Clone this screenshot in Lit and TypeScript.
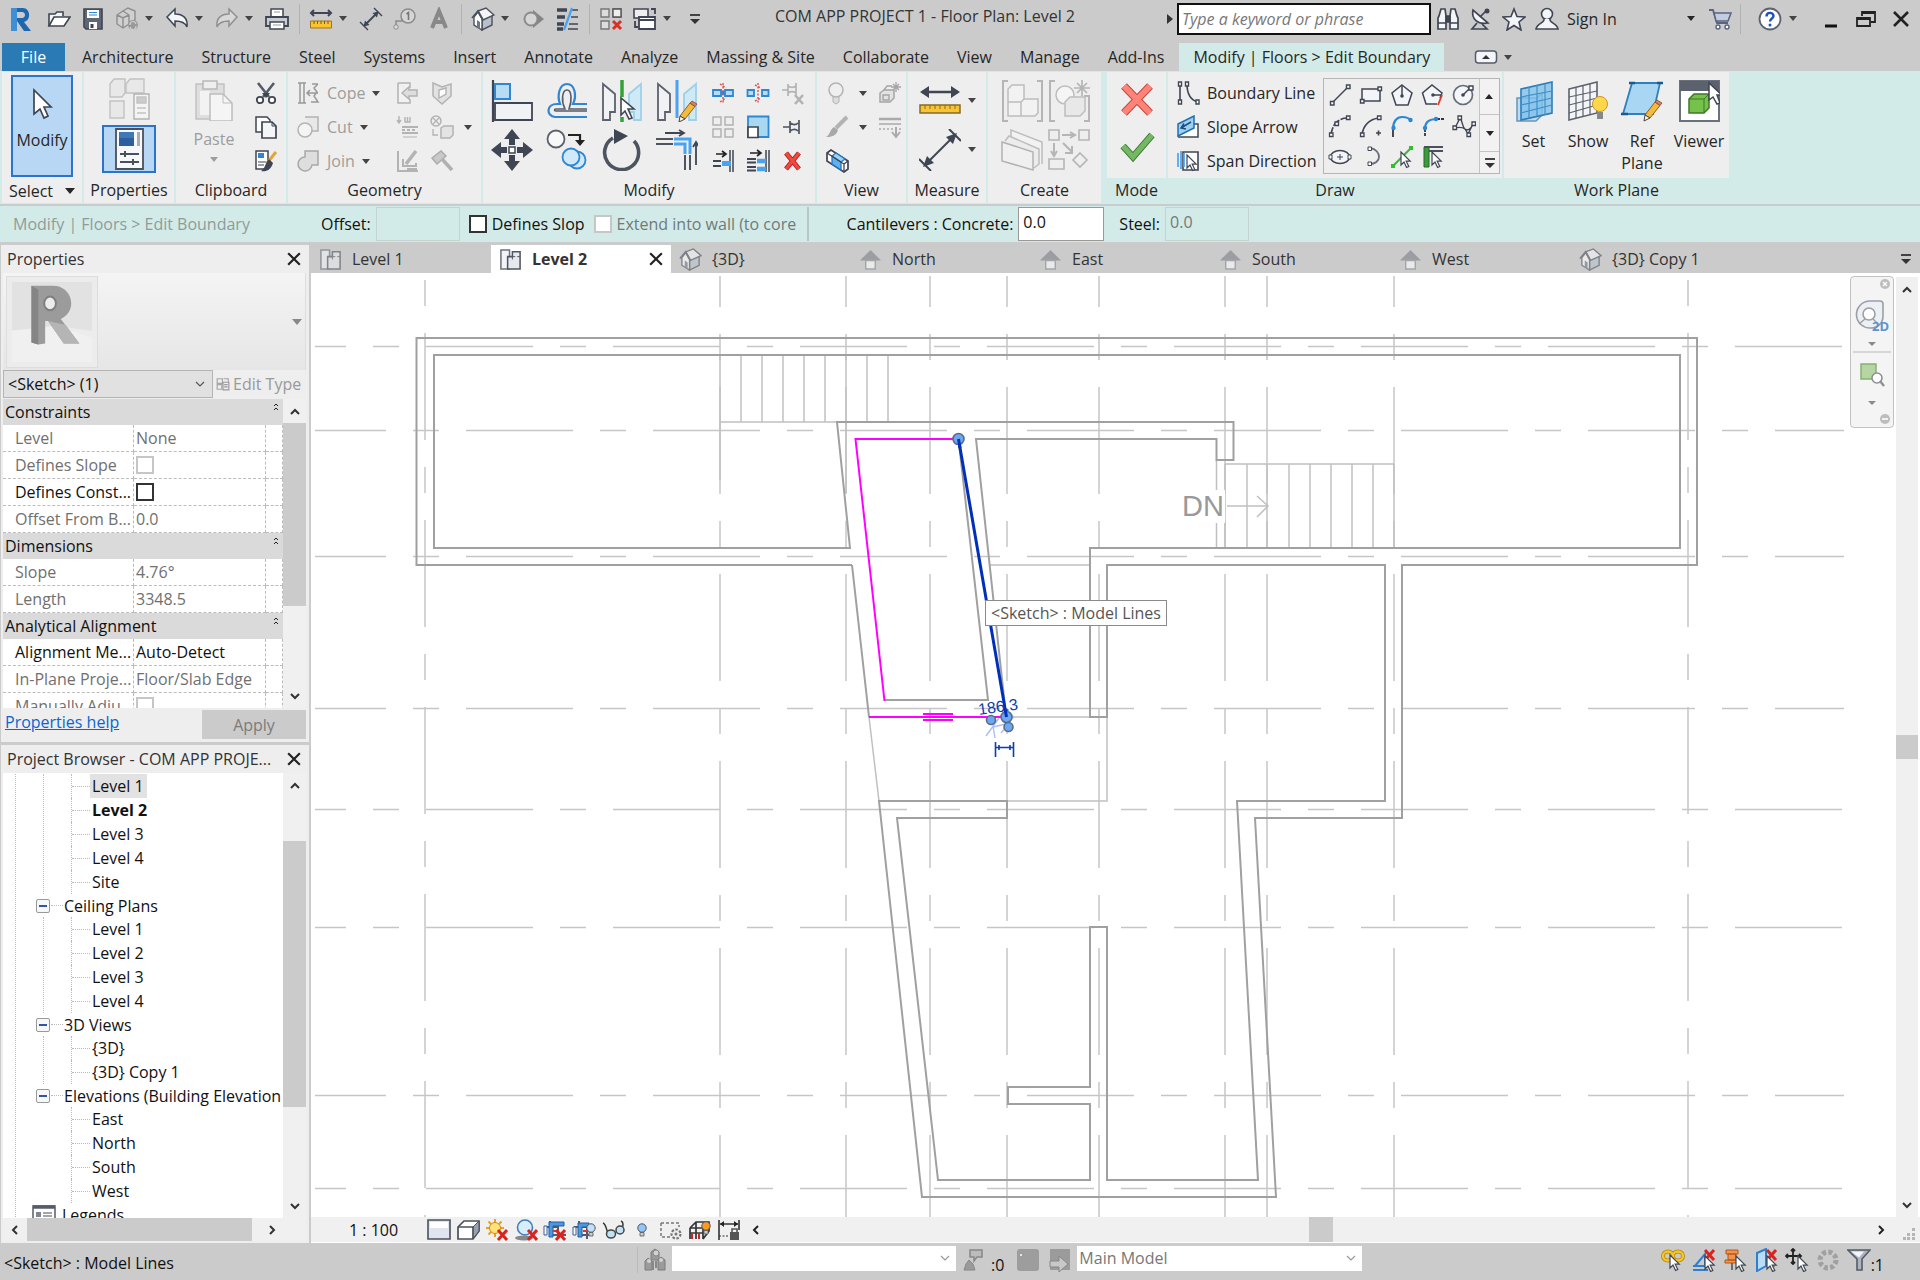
import { LitElement, html, svg, css, nothing, TemplateResult } from "lit";
import { customElement } from "lit/decorators.js";
import { classMap } from "lit/directives/class-map.js";

/* ---------- icons ---------- */

const D = "#3f4552";
const F = "#f3f5f8";
const B = "#2f86d2";
const LB = "#b5dcf5";
const G = "#b3b3b3";
const GF = "#e8e8e8";

const cursor = (x: number, y: number) =>
  svg`<path transform="translate(${x} ${y})" d="M0 0v13l3-3 2.6 5.5 2.2-1-2.6-5.3h4z" fill="#fff" stroke=${D} stroke-width="1.2"/>`;
const redX = (x: number, y: number) =>
  svg`<path transform="translate(${x} ${y})" d="M1 1l9 10M10 1L1 11" stroke="#d8231f" stroke-width="3" fill="none"/>`;
const bulb = (x: number, y: number, c: string) =>
  svg`<g transform="translate(${x} ${y})"><circle cx="5" cy="5" r="4.2" fill=${c} stroke="#555"/><path d="M3 9.5h4V13H3z" fill="#ccc" stroke="#555" stroke-width=".8"/></g>`;
const pencil = (x: number, y: number) =>
  svg`<g transform="translate(${x} ${y})"><path d="M2 15L12 2l5 3.5L7 18z" fill="#f5b93b" stroke="#8a6220"/><path d="M2 15l5 3-6 3z" fill="#fff3dc" stroke="#444"/><path d="M12 2l2-2 5 3-2 2.5z" fill="#e27a5e" stroke="#7c4b40" stroke-width=".8"/></g>`;

const ICONS: Record<string, TemplateResult> = {
  open: svg`<path d="M2 19V7h6l2-2h6v4" fill=${F} stroke=${D} stroke-width="1.6"/><path d="M2 19l5-9h16l-6 9z" fill="#fff" stroke=${D} stroke-width="1.6"/>`,
  save: svg`<path d="M3 2h18v20H5l-2-2z" fill="#5f6675" stroke=${D} stroke-width="1.6"/><path d="M6 3h12v8H6z" fill="#fff"/><path d="M8 5.5h8M8 8h8" stroke=${B} stroke-width="1.2"/><path d="M8 15h8v7H8z" fill="#fff"/><path d="M9.5 17h3v4h-3z" fill=${D}/>`,
  sync: svg`<path d="M2 8l6-4 6 4v9l-6 4-6-4zM2 8l6 3 6-3M8 11v10M8 4l5-3 7 3v9l-6 3" fill="#d0d0d0" stroke="#8e8e8e" stroke-width="1.4"/><circle cx="18" cy="18" r="5" fill="#9a9a9a"/><path d="M15 18a3 3 0 0 1 6-1M21 19a3 3 0 0 1-6 1" stroke="#ddd" fill="none"/>`,
  undo: svg`<path d="M2 10l8-8v5c8 0 13 4 12 13-2-5-6-6-12-6v5z" fill=${F} stroke=${D} stroke-width="1.5"/>`,
  redo: svg`<path d="M22 10l-8-8v5C6 7 1 11 2 20c2-5 6-6 12-6v5z" fill="#d8d8d8" stroke="#909090" stroke-width="1.5"/>`,
  print: svg`<path d="M6 2h12v8H6z" fill="#fff" stroke=${D} stroke-width="1.5"/><path d="M1 10h22v9H1z" fill="#c6cbd4" stroke=${D} stroke-width="1.8"/><path d="M5 15h14v7H5z" fill="#fff" stroke=${D} stroke-width="1.5"/><path d="M9 5h6M8 18h8" stroke="#999"/>`,
  measure: svg`<path d="M2 6h20M5 3L2 6l3 3M19 3l3 3-3 3" stroke=${D} stroke-width="2" fill="none"/><path d="M1.500 14h21v7h-21z" fill="#f6c52f" stroke="#a3741b"/><path d="M5 14v3M8.500 14v3M12 14v3M15.500 14v3M19 14v3" stroke="#7d5810"/>`,
  dim: svg`<path d="M5 19L19 5" stroke=${D} stroke-width="1.8"/><path d="M19.500 4.500l-6 1.500 4.500 4.500zM4.500 19.500L6 13.500l4.500 4.500z" fill=${D}/><path d="M15 1l8 8M1 15l8 8" stroke=${D} stroke-width="1.400"/>`,
  tag: svg`<path d="M3 21V14h7" stroke="#8c8c8c" stroke-width="1.500" fill="none"/><circle cx="3" cy="20" r="2.200" fill="#ddd" stroke="#8c8c8c"/><circle cx="15" cy="9" r="7" fill="#d6d6d6" stroke="#8c8c8c" stroke-width="1.500"/><path d="M13.500 7l2-1.500V13" stroke="#777" stroke-width="1.600" fill="none"/>`,
  lettera: svg`<path d="M5 21L12 4l7 17M8 15h8" fill="none" stroke="#888" stroke-width="4"/>`,
  house: svg`<path d="M11 12l10-4v10l-10 5z" fill="#b9c0cc" stroke="#4b515d" stroke-width="1.400"/><path d="M3 10l4-5 4 7v11l-8-5z" fill="#fff" stroke="#4b515d" stroke-width="1.400"/><path d="M7 4l8-3 8 7-11 5z" fill=${F} stroke="#4b515d" stroke-width="1.400"/><path d="M1 11l6-7 5 9" fill="none" stroke="#4b515d" stroke-width="1.800"/><path d="M6 13l3 2v7l-3-2z" fill="#6f7888"/>`,
  section: svg`<path d="M12 3l11 9-11 9z" fill="#858585"/><circle cx="10" cy="12" r="6.500" fill="#d6d6d6" stroke="#8c8c8c" stroke-width="2"/>`,
  thin: svg`<path d="M2 3h10M2 10h8M2 17h7M2 22h6" stroke=${D} stroke-width="3.500"/><path d="M17 3h6M16 10h7M14 17h9M13 22h10" stroke=${D} stroke-width="1.500"/><path d="M17 1L9 23" stroke="#4aa3f0" stroke-width="2.200"/>`,
  closehid: svg`<g fill="#ddd" stroke="#777" stroke-width="1.400"><path d="M2 2h8v8H2zM14 2h8v8h-8zM2 14h8v8H2z"/></g><path d="M14 2h8v8h-8z" fill="#eee" stroke="#555" stroke-width="1.400"/><path d="M14 14l8 8M22 14l-8 8" stroke="#d93025" stroke-width="3"/>`,
  switchw: svg`<path d="M1 2h14v9H1z" fill="#eee" stroke=${D} stroke-width="1.600"/><path d="M6 10h16v12H6z" fill="#fff" stroke=${D} stroke-width="1.800"/><path d="M6 13h16M18 2h4v5M2 14v6h3" stroke=${D} stroke-width="1.800" fill="none"/>`,
  customise: svg`<path d="M7 8h10" stroke="#333" stroke-width="1.800"/><path d="M7 12h10l-5 5z" fill="#333"/>`,
  binoc: svg`<path d="M3 9l2-7h4l1 7v13H2V11zM21 9l-2-7h-4l-1 7v13h8V11z" fill=${F} stroke=${D} stroke-width="1.700"/><path d="M10 9h4v6h-4zM2 16h8M14 16h8" fill=${D} stroke=${D} stroke-width="1.500"/>`,
  dish: svg`<path d="M4 3c-2 9 5 15 15 13z" fill=${F} stroke=${D} stroke-width="1.700"/><path d="M11 10l6-6M8 16l-5 6h15l-5-5" stroke=${D} stroke-width="1.700" fill="none"/><circle cx="18" cy="4" r="2.500" fill=${D}/>`,
  star: svg`<path d="M12 2l3 7.500 8 .5-6 5 2 8-7-4.500L5 23l2-8-6-5 8-.5z" fill=${F} stroke=${D} stroke-width="1.600"/>`,
  person: svg`<circle cx="12" cy="7" r="5.500" fill=${F} stroke=${D} stroke-width="1.600"/><path d="M9 12c1 4-7 4-8 10h22c-1-6-9-6-8-10" fill=${F} stroke=${D} stroke-width="1.600"/>`,
  cart: svg`<path d="M1 3h4l4 13h11" fill="none" stroke="#5a6480" stroke-width="1.800"/><path d="M6 6h17l-3 8H8z" fill="#c3cde0" stroke="#5a6480" stroke-width="1.500"/><circle cx="10" cy="20" r="2" fill="#fff" stroke="#5a6480" stroke-width="1.400"/><circle cx="19" cy="20" r="2" fill="#fff" stroke="#5a6480" stroke-width="1.400"/>`,
  help: svg`<circle cx="12" cy="12" r="10.500" fill="#fff" stroke="#5b6272" stroke-width="1.800"/><path d="M8.500 9.500c0-5 7-4.500 7-.5 0 2.500-3.500 2.500-3.500 5.500" fill="none" stroke="#1e4fc0" stroke-width="2.400"/><circle cx="12" cy="18" r="1.500" fill="#1e4fc0"/>`,
  min: svg`<path d="M6 19h12" stroke="#111" stroke-width="3"/>`,
  restore: svg`<path d="M8 9V5h13v10h-4" fill="none" stroke="#222" stroke-width="1.800"/><path d="M3 11h13v8H3z" fill="none" stroke="#222" stroke-width="1.800"/><path d="M8 6h13M3 12h13" stroke="#222" stroke-width="2"/>`,
  close: svg`<path d="M5 5l14 14M19 5L5 19" stroke="#222" stroke-width="2.600"/>`,
  ribbonmin: svg`<rect x="1.500" y="6" width="21" height="12" rx="3" fill=${F} stroke="#555b68" stroke-width="1.500"/><path d="M8 14h8l-4-4z" fill="#333"/>`,

  /* clipboard / geometry */
  cut: svg`<path d="M4 2l11 14M20 2L9 16" stroke="#555b68" stroke-width="2.600"/><circle cx="6" cy="19" r="3.200" fill="#fff" stroke=${D} stroke-width="1.800"/><circle cx="18" cy="19" r="3.200" fill="#fff" stroke=${D} stroke-width="1.800"/><path d="M8 12h8l-4 5z" fill=${D}/>`,
  copy: svg`<path d="M2 2h11l3 3v12H2z" fill="#fff" stroke=${D} stroke-width="1.500"/><path d="M8 7h10l4 4v12H8z" fill=${F} stroke=${D} stroke-width="1.700"/><path d="M18 7v4h4" fill="none" stroke=${D}/>`,
  match: svg`<path d="M2 2h12v18H2z" fill="#fff" stroke=${D} stroke-width="1.500"/><path d="M4 4h6v5H4z" fill=${B}/><path d="M4 13h8M4 16h6" stroke=${D}/><path d="M22 3l-9 11" stroke="#e0a53b" stroke-width="3"/><path d="M15 10l4 4c-2 7-7 9-12 8 4-2 4-8 8-12z" fill=${D}/>`,
  cope: svg`<path d="M2 2h8M2 22h8M4 2v20M8 2v20M16 3h6M22 3l-4 4 3 4-3 4 4 6h-7M22 12H11M14 9l-3 3 3 3" fill="none" stroke="#999" stroke-width="1.500"/>`,
  gcut: svg`<path d="M9 2h13v14h-6" fill=${GF} stroke=${G} stroke-width="1.500"/><circle cx="9" cy="15" r="7" fill="#f4f4f4" stroke=${G} stroke-width="1.500"/>`,
  gjoin: svg`<path d="M9 2h13v14h-6a7 7 0 1 1-7-8z" fill="#dedede" stroke="#a8a8a8" stroke-width="1.500"/>`,
  g1: svg`<path d="M3 2h12v5M15 18v4H3V2" fill="#f2f2f2" stroke=${G} stroke-width="1.500"/><path d="M7 12l7-6v3h8v6h-8v3z" fill="#ddd" stroke=${G} stroke-width="1.500"/>`,
  g2: svg`<path d="M3 2l9 4 9-3v12l-9 8-9-8z" fill="#e2e2e2" stroke=${G} stroke-width="1.500"/><path d="M9 9l7-2v6l-7 4z" fill="#fff" stroke=${G} stroke-width="1.400"/>`,
  g3: svg`<path d="M4 1v7M2 5l2 3 2-3M10 2v5h5V2M12.500 2v5" fill="none" stroke=${G} stroke-width="1.400"/><path d="M7 12h16M7 18h16M7 15h3m2 0h3m2 0h3" stroke=${G} stroke-width="1.800"/><path d="M8 22h14" stroke=${G}/>`,
  g4: svg`<circle cx="6" cy="6" r="5" fill="none" stroke=${G} stroke-width="1.500"/><path d="M3 3l6 6M9 3L3 9M3 14v6h5" fill="none" stroke=${G} stroke-width="1.300"/><path d="M11 13l3-2h9v9l-3 3h-9z" fill="#e4e4e4" stroke=${G} stroke-width="1.500"/>`,
  g5: svg`<path d="M3 2v20h20M8 10v7h13v-3M12 20h10" fill="none" stroke=${G} stroke-width="2"/><path d="M21 2L11 15" stroke=${G} stroke-width="3.500"/>`,
  g6: svg`<path d="M2 9l9-7 5 5-9 8z" fill="#c9c9c9" stroke="#aaa" stroke-width="1.400"/><path d="M12 10l10 11" stroke="#b0b0b0" stroke-width="3.500"/>`,

  /* modify panel, small */
  split: svg`<path d="M2 9h8v6H2zM14 9h8v6h-8z" fill=${LB} stroke=${B} stroke-width="1.800"/><path d="M10 12h4" stroke=${B} stroke-width="4"/><path d="M12 2v20M9 3l6 4M9 21l6-4" stroke="#d65454" stroke-width="1.400" stroke-dasharray="2 1.500"/>`,
  splitgap: svg`<path d="M1.500 9h6.500v6H1.500zM16 9h6.500v6H16z" fill=${LB} stroke=${B} stroke-width="1.800"/><path d="M12 2v20M9 4l6 3M9 20l6-3" stroke="#d65454" stroke-width="1.400" stroke-dasharray="2 1.500"/>`,
  unpin: svg`<path d="M1 9h6M7 3v12M7 5c3 2 5 2 8 0M7 12c3-2 5-2 8 0M15 2v12" fill="none" stroke=${G} stroke-width="1.700"/><path d="M14 14l8 9M22 14l-8 9" stroke=${G} stroke-width="2.600"/>`,
  array: svg`<g fill="none" stroke=${G} stroke-width="1.500"><path d="M2 2h8v8H2zM14 2h8v8h-8zM2 14h8v8H2zM14 14h8v8h-8z"/></g>`,
  scale: svg`<path d="M2 1.500h20.500V22H2z" fill="#a9d8f3" stroke=${B} stroke-width="1.800"/><path d="M2 12h10v10.500H2z" fill="#fff" stroke=${D} stroke-width="1.700"/>`,
  pin: svg`<path d="M2 12h7M9 6v12M9 8c3 2 6 2 8 0M9 16c3-2 6-2 8 0M18 5v14" fill="none" stroke="#4d5360" stroke-width="1.700"/>`,
  trim1: svg`<path d="M22 1v22M19 1v22" stroke=${D} stroke-width="1.500"/><path d="M5 5h9M11 2l4 3-4 3" fill="none" stroke="#222" stroke-width="1.700"/><path d="M2 12h8M2 17h8" stroke=${D} stroke-width="2"/><path d="M11 14.500h9" stroke="#4aa3f0" stroke-width="5"/>`,
  trim2: svg`<path d="M23 1v22M20 1v22" stroke=${D} stroke-width="1.500"/><path d="M4 4h10M11 1l4 3-4 3" fill="none" stroke="#222" stroke-width="1.600"/><path d="M1 10h9M1 13.500h9M1 18h9M1 21.500h9" stroke=${D} stroke-width="1.800"/><path d="M11 12h9M11 20h9" stroke="#4aa3f0" stroke-width="4.500"/>`,
  del: svg`<path d="M5 4l13 16M18 4L5 20" stroke="#c0201c" stroke-width="5"/><path d="M5 4l13 16M18 4L5 20" stroke="#ea4b43" stroke-width="3"/>`,

  /* view panel */
  vbulb: svg`<circle cx="11" cy="9" r="7" fill="#efefef" stroke=${G} stroke-width="1.500"/><path d="M8 16h6v5l-3 2-3-2z" fill="#ddd" stroke=${G}/>`,
  vbox: svg`<path d="M2 12l4-3h10v8l-4 4H2z" fill="#e2e2e2" stroke="#a5a5a5" stroke-width="1.500"/><path d="M5 14h6v5H5zM6 9l3-4h5" fill="none" stroke="#a5a5a5" stroke-width="1.400"/><path d="M18 1v10M13 6h10M15 3l6 6M21 3l-6 6" stroke="#a5a5a5" stroke-width="1.300"/>`,
  vbrush: svg`<path d="M22 2L11 13" stroke=${G} stroke-width="4"/><path d="M9 12l4 3c-2 6-6 7-12 7 4-2 4-8 8-10z" fill="#a8a8a8"/>`,
  vlines: svg`<path d="M1 4h22" stroke="#aaa" stroke-width="2.500"/><path d="M1 9h22" stroke="#aaa" stroke-width="1.500"/><path d="M1 14h22" stroke="#aaa" stroke-dasharray="2 2" stroke-width="1.500"/><path d="M18 12v9M14 17l4 5 4-5" fill="none" stroke="#aaa" stroke-width="2"/>`,
  vsel: svg`<path d="M2 4l4-3 17 11v8l-4 3L2 12z" fill="#fff" stroke=${D} stroke-width="1.700"/><path d="M7 7l9 6v8l-9-6z" fill="#5cb2ee" stroke="#2a74c0" stroke-width="1.300"/><path d="M7 7l4-3 9 6-4 3z" fill="#9fd3f5" stroke="#2a74c0" stroke-width="1.300"/><path d="M2 4l17 11v8M19 15l4-3" fill="none" stroke=${D} stroke-width="1.300"/>`,

  /* draw panel */
  bline: svg`<path d="M4 3v18M11 3c0 10 3 16 11 18" fill="none" stroke=${D} stroke-width="1.600"/><g fill="#fff" stroke=${D} stroke-width="1.400"><path d="M2.500 1h3v4h-3zM9.500 1h3v4h-3zM2.500 19h3v4h-3zM20 19h3v4h-3z"/></g>`,
  slope: svg`<path d="M5 9h17v13H2" fill="#fff" stroke=${D} stroke-width="1.500"/><path d="M2 9l16-8v12L2 21z" fill="#9fd0ef" stroke="#1f6fb5" stroke-width="1.500"/><path d="M15 7L5 13M8 8.500L5 13l5 1" fill="none" stroke="#1c4f80" stroke-width="1.500"/>`,
  span: svg`<path d="M7 3h15v18H7z" fill="#fff" stroke=${D} stroke-width="1.600"/><path d="M2 4v14M5 2v18M8 4v14" stroke="#4aa3f0" stroke-width="1.700"/>${cursor(11, 6)}`,
  dline: svg`<path d="M4 20L20 4" stroke=${D} stroke-width="1.500"/><path d="M2.500 18.500h3.500v3.500H2.500zM18.500 2h3.500v3.500h-3.500z" fill="#fff" stroke=${D} stroke-width="1.400"/>`,
  drect: svg`<path d="M3 6h18v12H3z" fill=${F} stroke=${D} stroke-width="1.500"/><path d="M1.500 16.500h3.500v3.500H1.500zM19 4h3.500v3.500H19z" fill="#fff" stroke=${D} stroke-width="1.400"/>`,
  dpoly1: svg`<path d="M12 2l10 8-4 12H6L2 10z" fill=${F} stroke=${D} stroke-width="1.500"/><path d="M12 3v10" stroke=${D} stroke-width="1.500"/><circle cx="12" cy="13" r="1.800" fill=${D}/>`,
  dpoly2: svg`<path d="M16 21H5L1.500 10 11 2l10 8-2 5" fill=${F} stroke=${D} stroke-width="1.500"/><path d="M12 12h8" stroke=${D} stroke-width="1.500"/><circle cx="12" cy="12" r="1.800" fill=${D}/><path d="M21 12l-4 10" stroke="#e32" stroke-width="1.800"/>`,
  dcirc: svg`<circle cx="11" cy="12" r="9.500" fill=${F} stroke="#676d78" stroke-width="1.700"/><path d="M11 12l7-7" stroke=${D} stroke-width="1.500"/><circle cx="11" cy="12" r="1.800" fill=${D}/><path d="M17 3h4v4h-4z" fill="#fff" stroke=${D} stroke-width="1.400"/>`,
  darc1: svg`<path d="M3 21C4 14 6 10 10 7S17 4 20 4" fill="none" stroke=${D} stroke-width="1.700" stroke-dasharray="8 1.500"/><path d="M1.500 19h3.500v3.500H1.500zM7 8h3.500v3.500H7zM18.500 2h3.500v3.500h-3.500z" fill="#fff" stroke=${D} stroke-width="1.300"/>`,
  darc2: svg`<path d="M3 21C4 12 10 5 20 4" fill="none" stroke=${D} stroke-width="1.700"/><path d="M1.500 19h3.500v3.500H1.500zM18.500 2h3.500v3.500h-3.500z" fill="#fff" stroke=${D} stroke-width="1.300"/><path d="M17 19h5M19.500 16.500v5" stroke=${D} stroke-width="1.600"/>`,
  darc3: svg`<path d="M3 15C3 7 7 3 12 3s8 2 9 4" fill="none" stroke="#2f86d2" stroke-width="2.200"/><path d="M3 15v8" stroke="#334" stroke-width="1.800"/><circle cx="3.500" cy="14" r="2.200" fill="#2f86d2"/><circle cx="20.500" cy="6" r="2.200" fill="#2f86d2"/>`,
  dfillet: svg`<path d="M4 15c0-7 4-10 12-10" fill="none" stroke="#2f86d2" stroke-width="2.200"/><path d="M4 15v8M16 5h7" stroke="#334" stroke-width="1.800" stroke-dasharray="3 1"/><circle cx="4" cy="14" r="2.200" fill="#2f86d2"/><circle cx="15" cy="5" r="2.200" fill="#2f86d2"/>`,
  dspline: svg`<path d="M3 14L8 4M8 4c3 4 2 9 5 11s6 0 8-5M16 20l5-10M3 14c4-1 7-1 10 1l3 5" fill="none" stroke=${D} stroke-width="1.400"/><path d="M1 12h3.500v3.500H1zM6 2h3.500v3.500H6zM15 19h3.500v3.500H15zM20 8h3.500v3.500H20z" fill="#fff" stroke=${D} stroke-width="1.300"/>`,
  dell: svg`<ellipse cx="12" cy="12" rx="9.500" ry="6.500" fill=${F} stroke=${D} stroke-width="1.600"/><path d="M12 9v6M9 12h6" stroke=${D}/><path d="M1 10h3v4H1zM20 10h3v4h-3z" fill="#fff" stroke=${D}/>`,
  dell2: svg`<path d="M11 3c6 1 9 5 9 9s-4 7-9 7" fill="none" stroke="#676d78" stroke-width="1.800"/><path d="M9 2h3.500v3.500H9zM9 17h3.500v3.500H9z" fill="#fff" stroke=${D}/>`,
  dpick: svg`<path d="M3 21L21 3" stroke="#3cb83c" stroke-width="2.200"/><path d="M1 19h4v4H1zM19 1h4v4h-4z" fill="#2fbf2f"/>${cursor(11, 7)}`,
  dwall: svg`<path d="M3 2h5v20H3z" fill="#3d9a3d" stroke="#236b23"/><path d="M3 2h19M8 6h14" stroke="#4b515d" stroke-width="1.800"/>${cursor(11, 7)}`,

  /* view tabs */
  plan: svg`<path d="M2 2h9v20H2z" fill="#f2f4f7" stroke="#6c727e" stroke-width="1.600"/><path d="M14 4h8v18H9V9h5z" fill="#e6e9ee" stroke="#50565f" stroke-width="1.600"/><path d="M9 9h13M14 9v5" fill="none" stroke="#50565f" stroke-dasharray="3 2"/>`,
  elev: svg`<path d="M12 2l11 11H1z" fill="#7d8088"/><path d="M7 13h10v9H7z" fill="#fff" stroke="#8b8e95" stroke-width="1.500"/>`,
  edittype: svg`<path d="M2 3h9v8H2zM13 3h8v5M2 13h8v8H2z" fill="none" stroke="#a5a5a5" stroke-width="2"/><path d="M12 9h10v13H12z" fill="#eee" stroke="#999" stroke-width="2"/><path d="M14 13h6M14 17h6" stroke="#999" stroke-width="2"/>`,
  legend: svg`<path d="M1 3h22v22H1z" fill="#fff" stroke="#555b68" stroke-width="1.500"/><path d="M1 4h22" stroke="#555b68" stroke-width="3.500"/><path d="M4 9h5v5H4z" fill="#7d8492"/><path d="M11 10h9M11 13h9M4 18h16" stroke="#888" stroke-width="1.500"/>`,

  /* view control bar */
  detail: svg`<path d="M1 2h22v19H1z" fill="#dfe5ee" stroke="#4a505c" stroke-width="1.600"/><path d="M3 4h18v6H3z" fill="#fff"/>`,
  vstyle: svg`<path d="M2 9l6-6h15v10l-6 8H2z" fill="#fff" stroke="#4a505c" stroke-width="1.700"/><path d="M17 9l6-6v10l-6 8z" fill="#9aa1ae" stroke="#4a505c"/><path d="M2 9h15v12" fill="none" stroke="#4a505c" stroke-width="1.400"/>`,
  sun: svg`<path d="M10 1v18M1 10h18M3.500 3.500l13 13M16.500 3.500l-13 13" stroke="#e8a21b" stroke-width="2"/><circle cx="10" cy="10" r="5.500" fill="#ffe27a" stroke="#d38c14"/>${redX(12, 11)}`,
  shadow: svg`<ellipse cx="10" cy="20" rx="9" ry="2.500" fill="#888"/><circle cx="11" cy="9.500" r="7.500" fill="#d8edfb" stroke="#3f7fbf" stroke-width="1.600"/>${redX(13, 11)}`,
  crop: svg`<path d="M2 9h13v12M7 3v14h16" fill="none" stroke="#555b68" stroke-width="2"/><path d="M1 8h3v9H1z" fill="#fff" stroke="#3b5d8c"/><path d="M6 4h15v4H10v11H6z" fill="#4d97dd" stroke="#1f5fa8"/><path d="M10 13h6" stroke="#d33" stroke-width="2"/>${redX(12, 11)}`,
  cropshow: svg`<path d="M2 9h13v12M7 3v14h12" fill="none" stroke="#555b68" stroke-width="2"/><path d="M1 9h3v8H1z" fill="#fff" stroke="#3b5d8c"/><path d="M6 5h11v4h-7v10H6z" fill="#4d97dd" stroke="#1f5fa8"/><path d="M11 13h5" stroke="#d33" stroke-width="2"/>${bulb(14, 5, "#bfe0ff")}`,
  glasses: svg`<path d="M2 5c3 1 3 6 5 10M20 3c3 1 2 5 1 8" fill="none" stroke="#333" stroke-width="1.500"/><ellipse cx="10" cy="16" rx="4.500" ry="4" fill="#bfe3f5" stroke="#444" stroke-width="1.500"/><ellipse cx="19" cy="12" rx="4" ry="4" fill="#bfe3f5" stroke="#444" stroke-width="1.500"/>`,
  reveal: svg`${bulb(7, 5, "#8fc6ff")}`,
  tempprop: svg`<path d="M2 5h18v4M2 5v14h9" fill="none" stroke="#777" stroke-width="1.500" stroke-dasharray="3 2"/><circle cx="17" cy="16" r="4.500" fill="#eee" stroke="#777" stroke-width="2.200" stroke-dasharray="2.500 1.500"/><circle cx="17" cy="16" r="1.500" fill="#777"/>`,
  analyt: svg`<path d="M2 10l6-6h13v9l-6 8M2 10h13v11M2 10v11M8 4v11M2 15h13M8 10v11" fill="none" stroke="#333" stroke-width="1.700"/><path d="M4 21v-6M11 21v-6" stroke="#c22" stroke-width="2"/>${bulb(13, 3, "#ff9a1f")}`,
  constr: svg`<path d="M2 2v20M22 2v10M3 6h18" stroke="#333" stroke-width="1.600"/><path d="M3 6l4-3v6zM21 6l-4-3v6z" fill="#222"/><path d="M2 18h10" stroke="#333" stroke-dasharray="2 1.500"/><path d="M13 14h9v8h-9z" fill="#555"/><path d="M15 14v-3h5v3" fill="none" stroke="#555" stroke-width="1.600"/>`,

  /* status bar */
  workset: svg`<path d="M8 4l4-3 4 3v8H8zM2 13l3-3 4 3v9H2zM15 12l3-3 4 3v10h-7z" fill="#9b9b9b" stroke="#7d7d7d"/><circle cx="13" cy="5" r="3" fill="#d2d2d2" stroke="#888"/><circle cx="6" cy="13" r="2" fill="#d2d2d2"/><circle cx="18" cy="12" r="2" fill="#d2d2d2"/><path d="M10 13v9M13 13v7" stroke="#888" stroke-width="2"/>`,
  editable: svg`<path d="M9 2h12v7h-5l-3 4v-4H9z" fill="#bbb" stroke="#888" stroke-width="1.500"/><path d="M3 22h11l-2-6-4-4-3 4z" fill="#9a9a9a" stroke="#888"/>`,
  square: svg`<rect x="1" y="1" width="22" height="22" rx="3" fill="#9d9d9d"/><circle cx="5" cy="7" r="1" fill="#fff"/>`,
  import: svg`<path d="M2 1h20v21H2z" fill="#9b9b9b"/><path d="M2 13h9V8l9 8-9 8v-5H2z" fill="#c8c8c8" stroke="#858585"/>`,
  sellink: svg`<ellipse cx="7" cy="8" rx="5" ry="4.500" fill="none" stroke="#b8860b" stroke-width="4"/><ellipse cx="17" cy="8" rx="5" ry="4.500" fill="none" stroke="#b8860b" stroke-width="4"/><ellipse cx="7" cy="8" rx="5" ry="4.500" fill="none" stroke="#f3c62c" stroke-width="2.400"/><ellipse cx="17" cy="8" rx="5" ry="4.500" fill="none" stroke="#f3c62c" stroke-width="2.400"/>${cursor(9, 7)}`,
  selunder: svg`<path d="M1 18h18M3 18L13 6v12M1 22h15" fill="none" stroke="#2f7fd0" stroke-width="2"/>${redX(12, 1)}${cursor(13, 8)}`,
  selpin: svg`<path d="M3 2h12v4H3zM5 6h8v6H5zM2 12h14v3H2z" fill="#f2934c" stroke="#b5561b"/><path d="M9 15v7" stroke="#555" stroke-width="1.600"/>${cursor(13, 8)}`,
  selface: svg`<path d="M3 5l9-4v17l-9 5z" fill="#b9dcf7" stroke="#2f7fd0" stroke-width="2"/><path d="M12 18h9" stroke="#555"/>${redX(12, 1)}${cursor(13, 8)}`,
  drag: svg`<path d="M8 1v15M1 8h15M6 3l2-2 2 2M6 14l2 2 2-2M3 6L1 8l2 2M14 6l2 2-2 2" fill="none" stroke="#222" stroke-width="1.800"/>${cursor(13, 8)}`,
  bg: svg`<circle cx="12" cy="12" r="8" fill="none" stroke="#a0a0a0" stroke-width="5" stroke-dasharray="4 2.300"/>`,
  filter: svg`<path d="M1 2h22l-8 9v11h-5V11z" fill="#aeb4bf" stroke="#555b68" stroke-width="1.600"/><path d="M4 3.500h13l-5 6z" fill="#f4f5f8"/>`,
};

const LARGE: Record<string, TemplateResult> = {
  modify: svg`<path d="M13 7v24l6-5 4 9 4-2-4-9h7z" fill="#fff" stroke=${D} stroke-width="1.700"/>`,
  types: svg`<g fill="#e8e8e8" stroke="#c2c2c2" stroke-width="1.400"><path d="M2 6l4-5h11v14l-3 4H2zM18 6l4-5h14v14H18zM2 23h14v17H2z"/><path d="M26 16h15v25H26z" fill="#f4f4f4" stroke="#b2b2b2"/><path d="M29 19h9v6h-9zM29 30h9M29 35h9" fill="#ccc"/></g>`,
  props: svg`<path d="M8 1h27v40H8z" fill="#f7f8fa" stroke="#4a505c" stroke-width="1.800"/><path d="M11 4h15v14H11z" fill="#2c5f9e"/><path d="M11 4h15v6H11z" fill="#3f77b7"/><path d="M29 4h3v14h-3z" fill="#a9adb5"/><path d="M12 26h19M12 34h19M17 23v6M25 31v6" stroke="#4a505c" stroke-width="2"/>`,
  paste: svg`<path d="M3 5h28v35H3z" fill="#dedede" stroke="#c2c2c2" stroke-width="1.500"/><path d="M10 2h14v8H10z" fill="#eee" stroke="#b8b8b8" stroke-width="1.500"/><path d="M7 12h10v24H7z" fill="#f2f2f2"/><path d="M17 15h13l9 9v18H17z" fill="#f5f5f5" stroke="#bdbdbd" stroke-width="1.500"/><path d="M30 15v9h9" fill="none" stroke="#bdbdbd"/>`,
  align: svg`<path d="M2 0v42" stroke=${D} stroke-width="2.200"/><path d="M4 4h15v15H4z" fill="#b8dcf3" stroke=${B} stroke-width="2"/><path d="M4 23h37v17H4z" fill="#f1f2f5" stroke=${D} stroke-width="1.800"/>`,
  offset: svg`<path d="M41 37H9c-9-1-9-13 2-13h3c-3-8-1-20 7-20s10 12 6 20h14" fill="none" stroke=${B} stroke-width="2.200"/><path d="M41 31H10c-2 0-2-2 0-2h9c-4-8-3-19 2-19s5 11 2 19h18" fill="none" stroke="#555b68" stroke-width="1.600"/>`,
  mirror: svg`<path d="M2 4l12 10v18H9v8H2z" fill="#f1f2f5" stroke="#5b616d" stroke-width="1.800"/><path d="M40 4L28 14v18h5v8h7z" fill="#cdeaf6" stroke="#9ed0e8" stroke-width="1.800"/><path d="M21 0v17M21 37v5" stroke="#35a235" stroke-width="3.500"/><path d="M20 18v17l4-4 4 8 3-1-4-9h6z" fill="#fff" stroke=${D} stroke-width="1.600"/>`,
  mirrordraw: svg`<path d="M2 4l12 10v18H9v8H2z" fill="#f1f2f5" stroke="#5b616d" stroke-width="1.800"/><path d="M40 4L28 14v18h5v8h7z" fill="#cdeaf6" stroke="#9ed0e8" stroke-width="1.800"/><path d="M21 0v38" stroke="#4aa3f0" stroke-width="3"/>${pencil(22, 21)}`,
  move: svg`<path d="M21 0l8 10h-5v6h-6v-6h-5zM21 42l8-10h-5v-6h-6v6h-5zM0 21l10-8v5h6v6h-6v5zM42 21l-10-8v5h-6v6h6v5z" fill=${D}/><path d="M18 18h6v6h-6z" fill="#fff" stroke=${D} stroke-width="1.500"/>`,
  copyl: svg`<circle cx="10" cy="10" r="8.500" fill="#f7f8fa" stroke="#5b616d" stroke-width="1.800"/><circle cx="31" cy="31" r="8.500" fill="#cfe9f8" stroke=${B} stroke-width="1.800"/><circle cx="25" cy="28" r="8.500" fill="#cfe9f8" stroke=${B} stroke-width="1.800"/><path d="M22 6h12v7" fill="none" stroke="#222" stroke-width="2.200"/><path d="M29 11h10l-5 6z" fill="#222"/>`,
  rotate: svg`<path d="M12 9a17 17 0 1 0 21 3" fill="none" stroke="#4d535f" stroke-width="3.600"/><path d="M13 0l14 7-14 8z" fill=${D}/>`,
  trim: svg`<path d="M9 4h18M23 1l5 3-5 3M40 36V14M37 18l3-5 3 5" fill="none" stroke=${D} stroke-width="1.800"/><path d="M0 10h17M0 15h17M29 26v15M34 26v15" stroke="#4d535f" stroke-width="2"/><path d="M18 10h16v15M18 15h11v10" fill="none" stroke="#4aa3f0" stroke-width="3"/>`,
  meas: svg`<path d="M3 12h36" stroke=${D} stroke-width="2.400"/><path d="M1 12l9-6v12zM41 12l-9-6v12z" fill=${D}/><path d="M1 25h40v8H1z" fill="#f6c52f" stroke="#8a6a2a" stroke-width="1.500"/><path d="M6 25v4M11 25v4M16 25v4M21 25v4M26 25v4M31 25v4M36 25v4" stroke="#8a6a2a"/>`,
  dimal: svg`<path d="M7 35L35 7" stroke=${D} stroke-width="2"/><path d="M38 4l-4 11-7-7zM4 38l4-11 7 7z" fill=${D}/><path d="M30 0l12 12M0 30l12 12" stroke=${D} stroke-width="2"/>`,
  group: svg`<path d="M7 1H2v40h5M36 1h5v40h-5" fill="none" stroke="#b5b5b5" stroke-width="2"/><path d="M7 9l4-4h12v14l-3 3H7zM7 22h13v14H7zM20 22l3-3h14v14l-3 3H20z" fill="#f2f2f2" stroke="#bdbdbd" stroke-width="1.500"/>`,
  similar: svg`<path d="M7 1H2v40h5M36 16h5v25h-5" fill="none" stroke="#b5b5b5" stroke-width="2"/><circle cx="17" cy="15" r="9" fill="#f5f5f5" stroke="#bdbdbd" stroke-width="1.500"/><path d="M17 22l5-5h15v14l-5 5H17z" fill="#e8e8e8" stroke="#bdbdbd" stroke-width="1.500"/><path d="M34 0v16M26 8h16M29 3l10 10M39 3L29 13" stroke="#b5b5b5" stroke-width="1.700"/>`,
  assembly: svg`<path d="M10 12V1l31 12v22" fill="#f2f2f2" stroke="#bdbdbd" stroke-width="1.500"/><path d="M4 12l4-5 30 13v15l-5 4" fill="#ececec" stroke="#bdbdbd" stroke-width="1.500"/><path d="M1 13l31 10v18L1 32z" fill="#f0f0f0" stroke="#b2b2b2" stroke-width="1.500"/>`,
  parts: svg`<g fill="#eee" stroke="#b5b5b5" stroke-width="1.600"><path d="M1 1h10v10H1zM31 1h10v10H31zM1 30h15v10H1zM32 24l7 7-7 7-7-7z"/></g><path d="M14 6h12M22 3l5 3-5 3M6 14v12M3 22l3 5 3-5M15 14l9 9M24 17v7h-7" fill="none" stroke="#b5b5b5" stroke-width="2"/>`,
  cancel: svg`<path d="M8 8l26 27M34 8L8 35" stroke="#c4473f" stroke-width="8"/><path d="M8 8l26 27M34 8L8 35" stroke="#ff8377" stroke-width="6"/>`,
  finish: svg`<path d="M7 21l10 11L36 10" fill="none" stroke="#3c7a30" stroke-width="7"/><path d="M7 21l10 11L36 10" fill="none" stroke="#74b866" stroke-width="5"/>`,
  wpset: svg`<path d="M4 18h20l5-5v22l-6 6H4z" fill="#bcdcf3" stroke="#6795b9" stroke-width="1.500"/><path d="M8 9l31-7v31L8 40z" fill="#7fc1ea" fill-opacity=".8" stroke="#2d7db8" stroke-width="1.600"/><path d="M16 7v31M24 5v31M32 4v31M8 17l31-6M8 25l31-7M8 33l31-8" stroke="#3f90c9" stroke-width="1.200"/>`,
  wpshow: svg`<path d="M2 9l28-7v31L2 40z" fill="#f3f4f6" stroke="#5b616d" stroke-width="1.600"/><path d="M9 7v31M16 5v31M23 4v31M2 17l28-6M2 25l28-7M2 33l28-8" stroke="#5b616d" stroke-width="1.200"/><circle cx="33" cy="24" r="7.500" fill="#ffd84a" stroke="#c9952a"/><path d="M30 32h6v7h-6z" fill="#888"/>`,
  wpref: svg`<path d="M11 3h28l-7 31H2z" fill="#a9d6f2" stroke="#2f7fb8" stroke-width="1.800"/><path d="M0 34h7M8 3h6M36 3h6" stroke="#1d5a8c" stroke-width="2.500"/>${pencil(22, 20)}`,
  wpview: svg`<path d="M2 1h39v40H2z" fill="#fff" stroke="#6a707c" stroke-width="2"/><path d="M2 1h39v10H2z" fill="#5b616d"/><path d="M11 19l5-5h15v14l-5 5H11z" fill="#76c04c" stroke="#3c7a26" stroke-width="1.500"/><path d="M11 19h15l5-5M26 19v14" fill="none" stroke="#3c7a26"/><path d="M31 3v17l4-3 4 7 3-1-3-8h5z" fill="#fff" stroke=${D} stroke-width="1.500"/>`,
};

const ic = (name: string, cls = "i24") =>
  html`<svg class=${cls} viewBox="0 0 24 24" aria-hidden="true">${ICONS[name]}</svg>`;
const big = (name: string, cls = "i42") =>
  html`<svg class=${cls} viewBox="0 0 42 42" aria-hidden="true">${LARGE[name]}</svg>`;
const tri = html`<svg class="tri" viewBox="0 0 10 6" aria-hidden="true"><path d="M0 0h10L5 6z" fill="currentColor"/></svg>`;
const chev = (dir: string) => {
  const d: Record<string, string> = {
    up: "M2 9l4-4 4 4",
    down: "M2 4l4 4 4-4",
    left: "M8 2L4 6l4 4",
    right: "M4 2l4 4-4 4",
  };
  return html`<svg class="chev" viewBox="0 0 12 12" aria-hidden="true"><path d=${d[dir]} fill="none" stroke="currentColor"/></svg>`;
};

/* ---------- floor plan ---------- */

const GRID_X = [720, 846, 930, 1007, 1099, 1225, 1267, 1394];
const GRID_X_OUTER = [425, 1688];
const GRID_Y_A = [346.5, 809.5, 927.5, 1188.5];
const GRID_Y_B = [430.5, 556.5, 708.5, 1095.5];
const STAIR_L = [741, 762, 783, 804, 825, 846, 867, 888];
const STAIR_R = [1225, 1247, 1267, 1289, 1310, 1331, 1352, 1373, 1394];

@customElement("plan-canvas")
export class PlanCanvas extends LitElement {
  static styles = css`
    :host { display: block; overflow: hidden; }
    .sheet { display: block; width: 100%; height: 100%; }
    .grid { stroke: #c6c6c6; stroke-width: 1.5; fill: none; stroke-dasharray: 107 27 26 27; }
    .thin { stroke: #c0c0c0; stroke-width: 1.5; fill: none; }
    .wall { stroke: #a0a0a0; stroke-width: 2; fill: none; }
    .pink { stroke: #ff00ff; stroke-width: 2; fill: none; }
    .pick { stroke: #0030b8; stroke-width: 3; fill: none; }
    .dim { stroke: #0a3fae; stroke-width: 1.6; fill: none; }
    .faint { stroke: #a9bff5; stroke-width: 1.4; fill: none; }
    .grip { fill: #6aa8f5; stroke: #5c6c84; stroke-width: 1.6; }
    .dn { font: 29px "Liberation Sans", Arial, sans-serif; fill: #999; }
    .dimtext { font: 16px "Liberation Sans", Arial, sans-serif; fill: #0a3fae; }
  `;
  render() {
    return html`<svg class="sheet" role="img" aria-label="Floor plan, Level 2">
      <g transform="translate(-312 -273)">
        ${GRID_X.map((x) => svg`<path class="grid" stroke-dashoffset="76" d="M${x} 276V1217"/>`)}
        ${GRID_X_OUTER.map((x) => svg`<path class="grid" stroke-dashoffset="133" d="M${x} 279V1217"/>`)}
        ${GRID_Y_A.map((y) => svg`<path class="grid" stroke-dashoffset="76" d="M315 ${y}H1844"/>`)}
        ${GRID_Y_B.map((y) => svg`<path class="grid" stroke-dashoffset="36" d="M315 ${y}H1844"/>`)}
        ${STAIR_L.map((x) => svg`<path class="thin" d="M${x} 355V422"/>`)}
        ${STAIR_R.map((x) => svg`<path class="thin" d="M${x} 464V548"/>`)}
        <path class="thin" d="M720 355V480M720 422H837M1225 464H1394M1216.500 460V548M869 717L879 801M1007 801H1107V717M1007 717H1090M990 565H1090M846 422V493"/>
        <path class="wall" d="M852 565H416.500V338H1697V565H1402V818H1255L1276 1197H922L879 801H1007V818H897L938 1180H1090V1104H1008V1087H1090V927H1107V1180H1258L1237 801H1385V565H1107V717H1090V548H1680V355H434V548H850L837 422H1233.500V460H1216.500V439H976L1006 716"/>
        <path class="wall" d="M852 565L869 717M958.500 439L988 700H884"/>
        <path d="M1183 490h42v33h-42z" fill="#fff"/>
        <text class="dn" x="1182" y="516">DN</text>
        <path class="thin" d="M1227 506H1268M1257 496l11 10-11 11"/>
        <path class="pink" d="M958 439H855.500L884.500 701M869 717H1006M923 714h30M923 720h30"/>
        <path class="faint" d="M986 736L999 718M993 726l2 12M993 727l13-3M1001 733l5-6M1010 721l4-5"/>
        <path class="pick" d="M958.500 439L1006.500 717"/>
        <text class="dimtext" transform="rotate(-8 979 715)" x="979" y="715">186.3</text>
        <circle class="grip" cx="958.500" cy="439" r="5.500"/>
        <circle class="grip" cx="1006.500" cy="717" r="5.500"/>
        <circle class="grip" cx="991" cy="720" r="4.500"/>
        <circle class="grip" cx="1008.500" cy="727" r="4.500"/>
        <path class="pick" d="M958.500 439l1.500 9M1006.500 717l-1.500-8"/>
        <path class="dim" d="M995.500 742v15M1013.500 742v15M996 747.500h17M999 745v5M1010 745v5"/>
      </g>
    </svg>`;
  }
}

/* ---------- data ---------- */

type Tool = { icon?: string; label?: string; split?: boolean; sep?: boolean };

const QUICK: Tool[] = [
  { icon: "open", label: "Open" },
  { icon: "save", label: "Save" },
  { icon: "sync", label: "Synchronize", split: true },
  { icon: "undo", label: "Undo", split: true },
  { icon: "redo", label: "Redo", split: true },
  { icon: "print", label: "Print" },
  { sep: true },
  { icon: "measure", label: "Measure", split: true },
  { icon: "dim", label: "Aligned dimension" },
  { icon: "tag", label: "Tag" },
  { icon: "lettera", label: "Text" },
  { sep: true },
  { icon: "house", label: "Default 3D view", split: true },
  { icon: "section", label: "Section" },
  { icon: "thin", label: "Thin lines" },
  { sep: true },
  { icon: "closehid", label: "Close inactive views" },
  { icon: "switchw", label: "Switch windows", split: true },
  { icon: "customise", label: "Customize toolbar" },
];

const TABS = ["Architecture", "Structure", "Steel", "Systems", "Insert", "Annotate", "Analyze", "Massing & Site", "Collaborate", "View", "Manage", "Add-Ins"];

const VIEW_TABS = [
  { icon: "plan", name: "Level 1" },
  { icon: "plan", name: "Level 2", active: true },
  { icon: "house", name: "{3D}" },
  { icon: "elev", name: "North" },
  { icon: "elev", name: "East" },
  { icon: "elev", name: "South" },
  { icon: "elev", name: "West" },
  { icon: "house", name: "{3D} Copy 1" },
];

type Prop = { name: string; value?: string; check?: boolean; live?: boolean };
const PROPS: { group: string; rows: Prop[] }[] = [
  { group: "Constraints", rows: [
    { name: "Level", value: "None" },
    { name: "Defines Slope", check: true },
    { name: "Defines Const...", check: true, live: true },
    { name: "Offset From B...", value: "0.0" },
  ] },
  { group: "Dimensions", rows: [
    { name: "Slope", value: "4.76°" },
    { name: "Length", value: "3348.5" },
  ] },
  { group: "Analytical Alignment", rows: [
    { name: "Alignment Me...", value: "Auto-Detect", live: true },
    { name: "In-Plane Proje...", value: "Floor/Slab Edge" },
    { name: "Manually Adju...", check: true },
  ] },
];

const TREE: { name?: string; items: string[] }[] = [
  { items: ["Level 1", "Level 2", "Level 3", "Level 4", "Site"] },
  { name: "Ceiling Plans", items: ["Level 1", "Level 2", "Level 3", "Level 4"] },
  { name: "3D Views", items: ["{3D}", "{3D} Copy 1"] },
  { name: "Elevations (Building Elevation", items: ["East", "North", "South", "West"] },
];

const VIEW_CTRL = ["detail", "vstyle", "sun", "shadow", "crop", "cropshow", "glasses", "reveal", "tempprop", "analyt", "constr"];
const SELECT_CTRL = ["sellink", "selunder", "selpin", "selface", "drag", "bg"];
const DRAW = ["dline", "drect", "dpoly1", "dpoly2", "dcirc", "darc1", "darc2", "darc3", "dfillet", "dspline", "dell", "dell2", "dpick", "dwall"];

const iconBtn = (name: string, label = name) =>
  html`<button class="ib" aria-label=${label}>${ic(name)}</button>`;
const bigBtn = (name: string, label = name) =>
  html`<button class="ib" aria-label=${label}>${big(name)}</button>`;
const arrowBtn = (label: string) => html`<button class="ib arrow" aria-label=${label}>${tri}</button>`;

@customElement("app-root")
export class AppRoot extends LitElement {
  static styles = css`
    :host {
      display: flex; flex-direction: column; height: 100vh; min-height: 900px;
      background: #cbcbcb; color: #262626; overflow: hidden;
      font: 16px/20px "Open Sans", "Noto Sans", sans-serif;
    }
    * { box-sizing: border-box; }
    button, input, select { font: inherit; color: inherit; margin: 0; padding: 0; border: 0; background: none; border-radius: 0; }
    button { cursor: pointer; }
    select { appearance: none; outline: none; }
    .i24 { width: 24px; height: 24px; display: block; flex: none; }
    .i42 { width: 42px; height: 42px; display: block; flex: none; }
    .tri { width: 8px; height: 5px; display: block; flex: none; }
    .chev { width: 12px; height: 12px; display: block; flex: none; stroke-width: 2; }
    .ib { display: flex; align-items: center; justify-content: center; }
    .grow { flex: 1; }

    /* title bar */
    .title { display: flex; align-items: center; height: 37px; padding-left: 10px; flex: none; }
    .logo { width: 37px; flex: none; }
    .quick { display: flex; align-items: center; color: #333; }
    .q { width: 34px; justify-content: flex-start; }
    .q.split { width: 30px; }
    .q.arrow { width: 20px; justify-content: flex-start; }
    .qsep { width: 10px; height: 30px; border-left: 1px solid #b2b2b2; }
    .doc { flex: 1; padding: 0 8px 6px 58px; color: #333; white-space: nowrap; }
    .search { width: 254px; height: 32px; border: 2px solid #111; background: #fff; padding: 0 3px; font-style: italic; }
    .search::placeholder { color: #777; opacity: 1; }
    .infoicons { display: flex; gap: 9px; padding: 0 8px 0 5px; }
    .signin { display: flex; align-items: center; justify-content: space-between; width: 128px; }
    .after { display: flex; align-items: center; padding: 0 7px 0 13px; gap: 8px; }
    .win { display: flex; gap: 11px; padding: 0 7px 0 22px; }

    /* ribbon tabs */
    .tabs { display: flex; align-items: stretch; height: 34px; padding: 6px 0 0 2px; flex: none; }
    .tab { padding: 0 14px; color: #262626; white-space: nowrap; }
    .file { width: 63px; background: #2a7ab5; color: #fff; margin-right: 3px; padding: 0; }
    .tab.on { background: #d3ebe8; margin-left: 1px; }
    .rmin { display: flex; align-items: center; gap: 6px; padding-left: 30px; }

    /* ribbon */
    .ribbon { display: flex; gap: 2px; height: 133px; padding: 1px 0 1px 2px; background: #d3ebe8; flex: none; }
    .panel { display: flex; flex-direction: column; background: #eee; flex: none; }
    .body { flex: 1; display: flex; padding: 4px 8px 0; }
    .cap { height: 25px; line-height: 24px; text-align: center; }
    .panel.ctx .cap { background: #d3ebe8; }
    .w80 { width: 80px; } .w90 { width: 90px; } .w110 { width: 110px; } .w193 { width: 193px; } .w332 { width: 332px; }
    .w89 { width: 89px; } .w78 { width: 78px; } .w113 { width: 113px; } .w59 { width: 59px; } .w334 { width: 334px; } .w225 { width: 225px; }
    .gapl { margin-left: 4px; }
    .selbtn { display: flex; flex-direction: column; align-items: center; gap: 5px; width: 62px; height: 102px; padding-top: 6px; background: #b7d7f5; border: 2px solid #2a74cc; margin: -1px 0 0 1px; }
    .caps { display: flex; align-items: center; justify-content: center; gap: 12px; }
    .caps .tri { width: 10px; height: 6px; }
    .stack { flex-direction: column; align-items: center; gap: 5px; padding-top: 6px; }
    .on2 { width: 54px; height: 48px; border: 2px solid #2a74cc; background: #b7d7f5; }
    .off { color: #9d9d9d; }
    .dk { color: #444; }
    .lbl { display: flex; flex-direction: column; align-items: center; gap: 8px; }
    .clip { justify-content: space-between; }
    .paste { width: 60px; padding-top: 3px; justify-content: flex-start; }
    .three { display: grid; grid-template-rows: repeat(3, 34px); align-items: center; align-content: start; }
    .geo { grid-template-columns: 93px 35px 36px 16px; flex: 1; }
    .line { display: flex; align-items: center; gap: 7px; white-space: nowrap; }
    .bigs { display: grid; grid-template-columns: repeat(4, 55px); grid-template-rows: 49px 49px; justify-items: start; }
    .smalls { grid-template-columns: repeat(3, 35px); justify-items: start; }
    .view { grid-template-columns: 24px 24px 26px; column-gap: 2px; }
    .meas { display: grid; grid-template-columns: 48px 16px; grid-template-rows: 49px 49px; }
    .create { display: grid; grid-template-columns: 52px 42px; grid-template-rows: 49px 49px; }
    .arrow { color: #444; }
    .draw { padding-right: 2px; }
    .gallery { display: flex; border: 1px solid #b5b5b5; height: 96px; width: 177px; flex: none; margin-top: 2px; }
    .cells { display: grid; grid-template-columns: repeat(5, 31px); grid-auto-rows: 31px; justify-items: center; align-items: center; }
    .gscroll { display: grid; grid-template-rows: 35px 36px 1fr; gap: 1px; flex: 1; background: #c4c4c4; padding-left: 1px; }
    .gscroll .ib { background: #f2f2f2; overflow: hidden; }
    .up { transform: rotate(180deg); }
    .wp { display: grid; grid-template-columns: 55px 54px 54px 60px; padding: 8px 0 0 2px; align-content: start; }
    .wp .lbl { line-height: 22px; justify-content: flex-start; }

    /* options bar */
    .opts { display: flex; align-items: center; height: 41px; padding: 1px 0 1px; background: #d3ebe8; border-top: 2px solid #c8cccc; border-bottom: 3px solid #cbcbcb; flex: none; color: #111; white-space: nowrap; }
    .mode { width: 321px; padding-left: 13px; color: #8f9b99; }
    .fld { height: 34px; width: 84px; border: 1px solid #c3d3d0; padding: 0 4px 4px; margin-left: 5px; }
    .fld.live { background: #fff; border-color: #999; width: 86px; }
    .fld.gray { color: #777; }
    .cb { appearance: none; width: 18px; height: 18px; border: 2px solid #333; background: #fff; flex: none; margin: 0; display: block; }
    .cb.offb { border: 2px solid #c6c6c6; }
    .optlab { display: flex; align-items: center; gap: 5px; margin-left: 9px; }
    .cantil { margin-left: 38px; display: flex; align-items: center; }
    .steel { margin-left: 15px; display: flex; align-items: center; }
    .extend { width: 215px; padding-right: 14px; border-right: 2px solid #b9c6c4; height: 34px; color: #707a79; }

    /* body */
    .main { flex: 1; display: flex; min-height: 0; }
    .side { width: 311px; padding: 0 2px 0 1px; display: flex; flex-direction: column; gap: 3px; flex: none; }
    .pane { background: #eee; display: flex; flex-direction: column; padding: 0 3px 0 2px; }
    .phead { display: flex; align-items: center; justify-content: space-between; height: 28px; padding: 0 2px 0 4px; flex: none; color: #333; white-space: nowrap; }
    .phead .i24 { width: 20px; height: 20px; }
    .preview { display: flex; align-items: center; justify-content: space-between; height: 97px; padding: 4px 3px; background: linear-gradient(#f4f4f4, #e6e6e6); flex: none; border-right: 1px solid #ddd; }
    .thumb { width: 92px; height: 92px; border: 1px solid #ddd; background: #ececec; }
    .preview .tri { color: #888; width: 10px; height: 6px; }
    .typerow { display: flex; align-items: flex-start; height: 29px; flex: none; }
    .typebox { display: flex; align-items: center; width: 210px; height: 28px; border: 1px solid #b3b3b3; background: #e1e1e1; flex: none; }
    .typebox select { flex: 1; align-self: stretch; padding-left: 4px; margin-right: -20px; color: #111; }
    .typebox .chev { pointer-events: none; color: #555; margin-right: 6px; stroke-width: 1.2; }
    .edittype { display: flex; align-items: center; gap: 3px; height: 28px; padding-left: 3px; color: #999; white-space: nowrap; }
    .edittype .i24 { width: 14px; height: 14px; }
    .scroller { display: flex; overflow: hidden; }
    .ph { height: 309px; flex: none; }
    .props { border-collapse: separate; border-spacing: 0; table-layout: fixed; width: 280px; background: #fff; color: #707070; line-height: 20px; }
    .props th, .props td { height: 27px; padding: 0; text-align: left; font-weight: 400; white-space: nowrap; overflow: hidden; border-bottom: 1px dashed #bcbcbc; border-right: 1px dashed #bcbcbc; }
    .props .gh { height: 26px; background: #dadada; color: #111; padding-left: 2px; border: 0; }
    .ghin { display: flex; justify-content: space-between; align-items: center; padding-right: 4px; }
    .dbl { width: 6px; height: 10px; align-self: flex-start; }
    .props .nm { padding-left: 12px; }
    .props .vl { padding-left: 2px; }
    .c-name { width: 131px; } .c-val { width: 132px; }
    .props .live { color: #111; }
    .vbar { width: 23px; flex: none; background: #f0f0f0; display: flex; flex-direction: column; align-items: center; color: #333; margin-left: auto; }
    .vthumb { background: #cbcbcb; width: 100%; }
    .vbar .ib { height: 24px; width: 100%; flex: none; }
    .t1 { height: 183px; } .b1 { flex: 1; }
    .pfoot { display: flex; align-items: flex-start; justify-content: space-between; height: 34px; padding: 2px 0 0 2px; flex: none; }
    .pfoot a { color: #0a66cf; line-height: 24px; }
    .apply { width: 104px; height: 29px; background: #cbcbcb; color: #7b7b7b; }
    .browser { flex: 1; min-height: 0; }
    .bhead { height: 28px; }
    .bh { flex: 1; min-height: 0; }
    .tree { flex: 1; min-width: 0; background: #fff; overflow: hidden; color: #111; padding: 1px 0 0 12px; }
    .branch { border-left: 1px dotted #bbb; }
    .node { height: 23px; display: flex; align-items: center; white-space: nowrap; }
    .box { width: 14px; height: 14px; border: 1px solid #999; border-radius: 2px; background: #f7f7f7; display: flex; align-items: center; justify-content: center; margin-left: 20px; margin-right: 1px; flex: none; }
    .box::before { content: ""; width: 8px; height: 2px; background: #2f55a8; }
    .dots { width: 12px; border-top: 1px dotted #bbb; flex: none; }
    .node .lab { padding-left: 1px; }
    .kids { list-style: none; margin: 0 0 0 27px; padding: 0 0 0 27px; border-left: 1px dotted #bbb; }
    .kids.last { border-left-color: transparent; }
    .leaf { display: flex; align-items: center; height: 24px; border-left: 1px dotted #bbb; }
    .leaf .dots { width: 18px; }
    .leaf .lab { padding: 0 3px 0 2px; line-height: 24px; }
    .leaf .sel { background: #e2e2e2; }
    .leaf .cur { font-weight: 700; }
    .legnode { display: flex; gap: 6px; margin-left: 16px; height: 24px; align-items: flex-start; }
    .legnode .lab { line-height: 24px; }
    .t2a { height: 44px; } .t2 { height: 266px; }
    .hbar { height: 23px; display: flex; align-items: center; background: #f0f0f0; flex: none; color: #333; }
    .hbar .ib { width: 24px; height: 22px; }
    .hthumb { width: 225px; height: 23px; background: #cbcbcb; margin-right: 8px; }
    .btail { height: 2px; flex: none; }

    .work { flex: 1; min-width: 0; display: flex; flex-direction: column; }
    .vtabs { display: flex; height: 28px; flex: none; align-items: stretch; }
    .vtab { flex: 0 1 180px; display: flex; align-items: center; padding: 0 5px 0 8px; gap: 10px; color: #333; white-space: nowrap; }
    .vtab .i24 { width: 23px; height: 23px; opacity: .6; }
    .vtab.on { background: #fff; font-weight: 700; }
    .vtab.on .i24 { opacity: 1; }
    .vtab .x { margin-left: auto; }
    .vtab .x .i24 { width: 20px; height: 20px; }
    .vmore { margin-left: auto; padding-right: 2px; color: #222; }
    .stage { flex: 1; display: flex; min-height: 0; background: #fff; position: relative; padding-left: 1px; }
    .stage plan-canvas { flex: 1; min-width: 0; }
    .sbar { width: 25px; padding: 4px 2px 0 1px; background: #fff; }
    .sbar .in { background: #f0f0f0; flex: 1; width: 22px; display: flex; flex-direction: column; align-items: center; }
    .t3a { flex: 434; } .t3 { height: 24px; width: 22px; background: #cbcbcb; } .t3b { flex: 434; }
    .tip { position: absolute; left: 674px; top: 327px; height: 26px; padding: 0 5px; border: 1px solid #8a8a8a; background: #fff; color: #555; line-height: 24px; white-space: nowrap; }
    .nav { position: absolute; right: 26px; top: 3px; width: 44px; height: 152px; border: 1px solid #c2c2c2; border-radius: 4px; background: #f4f4f4; }
    .nav svg { display: block; width: 42px; height: 150px; }
    .d2 { font: 700 13px "Open Sans", sans-serif; fill: #5c93cf; }

    .ctrl { display: flex; align-items: center; height: 25px; background: #f0f0f0; flex: none; margin-bottom: 1px; border-bottom: 0; color: #222; box-shadow: 0 1px #fff; }
    .scale { width: 116px; padding-left: 38px; color: #111; text-align: left; white-space: nowrap; }
    .vc { display: flex; gap: 5px; }
    .ctrl .lft { margin-left: 9px; }
    .hs { flex: 1; display: flex; height: 25px; }
    .h1 { flex: 545; } .hmid { width: 24px; background: #cbcbcb; } .h2 { flex: 540; }
    .grip { width: 12px; height: 12px; margin: 8px 5px 0 16px; }

    /* status bar */
    .status { display: flex; align-items: center; height: 37px; flex: none; padding-bottom: 4px; color: #111; }
    .hint { width: 638px; padding: 6px 0 0 4px; border-right: 1px solid #bbb; }
    .combo { display: flex; align-items: center; height: 25px; background: #fff; color: #777; margin-bottom: 3px; }
    .combo select { flex: 1; align-self: stretch; padding-left: 2px; margin-right: -20px; }
    .combo .chev { pointer-events: none; margin-right: 5px; color: #999; stroke-width: 1.2; }
    .c1 { width: 284px; } .c2 { width: 285px; }
    .stat { display: flex; align-items: center; padding: 0 5px; }
    .cnt { padding: 10px 12px 0 6px; }
    .gap8 { gap: 8px; display: flex; }
    .sels { display: flex; gap: 7px; }
    .endc { padding-right: 36px; padding-top: 10px; }
  `;

  private titleBar() {
    return html`<header class="title">
      <svg class="logo" viewBox="0 0 37 26" height="26" aria-hidden="true">
        <path d="M1 2h12c7 0 9 12 1 14l7 9h-7L7 15v10H1z" fill="#1f66b0"/>
        <path d="M1 2h6v23H1z" fill="#3e8fd6"/><path d="M7 6h5c4 0 4 6 0 6H7z" fill="#cbcbcb"/>
      </svg>
      <div class="quick">
        ${QUICK.map((t) => t.sep
          ? html`<span class="qsep"></span>`
          : html`<button class=${classMap({ ib: true, q: true, split: !!t.split })} aria-label=${t.label!}>${ic(t.icon!)}</button>${t.split
              ? html`<button class="ib q arrow" aria-label="${t.label} options">${tri}</button>` : nothing}`)}
      </div>
      <div class="doc">COM APP PROJECT 1 - Floor Plan: Level 2</div>
      <svg width="12" height="12" viewBox="0 0 12 12" aria-hidden="true"><path d="M2 1v10l6-5z" fill="#333"/></svg>
      <input class="search" type="text" aria-label="Search" placeholder="Type a keyword or phrase">
      <div class="infoicons">${iconBtn("binoc", "Find")}${iconBtn("dish", "Communication center")}${iconBtn("star", "Favorites")}${iconBtn("person", "Account")}</div>
      <button class="signin">Sign In ${tri}</button>
      <div class="after">${iconBtn("cart", "App store")}<span class="qsep"></span>${iconBtn("help", "Help")}</div>
      ${arrowBtn("Help options")}
      <div class="win">${iconBtn("min", "Minimize")}${iconBtn("restore", "Restore")}${iconBtn("close", "Close")}</div>
    </header>`;
  }

  private tabBar() {
    return html`<nav class="tabs">
      <button class="tab file">File</button>
      ${TABS.map((t) => html`<button class="tab">${t}</button>`)}
      <button class="tab on">Modify | Floors &gt; Edit Boundary</button>
      <span class="rmin">${iconBtn("ribbonmin", "Minimize ribbon")}${arrowBtn("Ribbon options")}</span>
    </nav>`;
  }

  private ribbon() {
    return html`<section class="ribbon">
      <div class="panel w80">
        <div class="body"><button class="selbtn">${big("modify")}<span>Modify</span></button></div>
        <div class="cap caps">Select ${tri}</div>
      </div>
      <div class="panel w90">
        <div class="body stack">${bigBtn("types", "Type properties")}<button class="ib on2" aria-label="Properties">${big("props")}</button></div>
        <div class="cap">Properties</div>
      </div>
      <div class="panel w110">
        <div class="body clip">
          <button class="lbl off paste"><span>${big("paste")}</span><span>Paste</span><span>${tri}</span></button>
          <div class="three">${iconBtn("cut", "Cut to clipboard")}${iconBtn("copy", "Copy to clipboard")}${iconBtn("match", "Match type")}</div>
        </div>
        <div class="cap">Clipboard</div>
      </div>
      <div class="panel w193">
        <div class="body three geo">
          <button class="line off">${ic("cope")}Cope<span class="dk">${tri}</span></button>${iconBtn("g1", "Wall joins")}${iconBtn("g2", "Split face")}<span></span>
          <button class="line off">${ic("gcut")}Cut<span class="dk">${tri}</span></button>${iconBtn("g3", "Beam joins")}${iconBtn("g4", "Paint")}${arrowBtn("Paint options")}
          <button class="line off">${ic("gjoin")}Join<span class="dk">${tri}</span></button>${iconBtn("g5", "Unjoin")}${iconBtn("g6", "Demolish")}<span></span>
        </div>
        <div class="cap">Geometry</div>
      </div>
      <div class="panel w332">
        <div class="body">
          <div class="bigs">${bigBtn("align")}${bigBtn("offset")}${bigBtn("mirror", "Mirror, pick axis")}${bigBtn("mirrordraw", "Mirror, draw axis")}${bigBtn("move")}${bigBtn("copyl", "Copy")}${bigBtn("rotate")}${bigBtn("trim")}</div>
          <div class="three smalls">${["split", "splitgap", "unpin", "array", "scale", "pin", "trim1", "trim2", "del"].map((n) => iconBtn(n))}</div>
        </div>
        <div class="cap">Modify</div>
      </div>
      <div class="panel w89">
        <div class="body three view">
          ${iconBtn("vbulb", "Hide")}${arrowBtn("Hide options")}${iconBtn("vbox", "Displace")}
          ${iconBtn("vbrush", "Override")}${arrowBtn("Override options")}${iconBtn("vlines", "Linework")}
          ${iconBtn("vsel", "Selection box")}
        </div>
        <div class="cap">View</div>
      </div>
      <div class="panel w78">
        <div class="body meas">${bigBtn("meas", "Measure")}${arrowBtn("Measure options")}${bigBtn("dimal", "Aligned dimension")}${arrowBtn("Dimension options")}</div>
        <div class="cap">Measure</div>
      </div>
      <div class="panel w113">
        <div class="body create">${bigBtn("group", "Create group")}${bigBtn("similar", "Create similar")}${bigBtn("assembly", "Create assembly")}${bigBtn("parts", "Create parts")}</div>
        <div class="cap">Create</div>
      </div>
      <div class="panel ctx w59 gapl">
        <div class="body stack">${bigBtn("cancel", "Cancel edit mode")}${bigBtn("finish", "Finish edit mode")}</div>
        <div class="cap">Mode</div>
      </div>
      <div class="panel ctx w334">
        <div class="body draw">
          <div class="three grow">
            <button class="line">${ic("bline")}Boundary Line</button>
            <button class="line">${ic("slope")}Slope Arrow</button>
            <button class="line">${ic("span")}Span Direction</button>
          </div>
          <div class="gallery">
            <div class="cells">${DRAW.map((n) => iconBtn(n))}</div>
            <div class="gscroll"><button class="ib up" aria-label="Previous row">${tri}</button><button class="ib" aria-label="Next row">${tri}</button><button class="ib" aria-label="More tools">${ic("customise")}</button></div>
          </div>
        </div>
        <div class="cap">Draw</div>
      </div>
      <div class="panel ctx w225">
        <div class="body wp">
          <button class="lbl">${big("wpset")}<span>Set</span></button>
          <button class="lbl">${big("wpshow")}<span>Show</span></button>
          <button class="lbl">${big("wpref")}<span>Ref<br>Plane</span></button>
          <button class="lbl">${big("wpview")}<span>Viewer</span></button>
        </div>
        <div class="cap">Work Plane</div>
      </div>
    </section>`;
  }

  private options() {
    return html`<section class="opts">
      <span class="mode">Modify | Floors &gt; Edit Boundary</span>
      <label for="offset">Offset:</label><input id="offset" class="fld" type="text" disabled>
      <label class="optlab"><input class="cb" type="checkbox">Defines Slop</label>
      <label class="optlab extend"><input class="cb offb" type="checkbox" disabled>Extend into wall (to core</label>
      <span class="cantil"><label for="conc">Cantilevers : Concrete:</label><input id="conc" class="fld live" type="text" value="0.0"></span>
      <span class="steel"><label for="steel">Steel:</label><input id="steel" class="fld gray" type="text" value="0.0" disabled></span>
    </section>`;
  }

  private properties() {
    return html`<section class="pane">
      <div class="phead">Properties <button class="ib" aria-label="Close properties">${ic("close")}</button></div>
      <div class="preview">
        <svg class="thumb" viewBox="0 0 92 92" aria-hidden="true">
          <path d="M5 5h82v50L50 50 5 55z" fill="#e2e2e2"/><path d="M5 55l45-5 37 12v25H5z" fill="#f0f0f0"/>
          <path d="M25 9h22c20 0 26 26 8 34l19 25H58L42 45h-3v23l-7 1-7-2z" fill="#9b9b9b"/>
          <path d="M25 9l7 4v56l-7-2z" fill="#858585"/><path d="M42 45l16 23h16L60 49z" fill="#b5b5b5"/>
          <ellipse cx="44" cy="27" rx="6" ry="7" fill="#ececec" stroke="#7f7f7f" stroke-width="2"/>
        </svg>
        ${tri}
      </div>
      <div class="typerow">
        <div class="typebox"><select aria-label="Element filter"><option>&lt;Sketch&gt; (1)</option></select>${chev("down")}</div>
        <button class="edittype">${ic("edittype")}Edit Type</button>
      </div>
      <div class="scroller ph">
        <div>
        <table class="props">
          <colgroup><col class="c-name"><col class="c-val"><col></colgroup>
          ${PROPS.map((g) => html`<tbody>
            <tr><th class="gh" colspan="3"><div class="ghin">${g.group}<svg class="dbl" viewBox="0 0 6 10" aria-hidden="true"><path d="M1 4l2-2 2 2M1 8l2-2 2 2" fill="none" stroke="#222"/></svg></div></th></tr>
            ${g.rows.map((r) => html`<tr class=${r.live ? "live" : ""}>
              <td class="nm">${r.name}</td>
              <td class="vl">${r.check ? html`<input class=${r.live ? "cb" : "cb offb"} type="checkbox" aria-label=${r.name} ?disabled=${!r.live}>` : r.value}</td>
              <td></td></tr>`)}
          </tbody>`)}
        </table></div>
        <div class="vbar"><button class="ib" aria-label="Scroll up">${chev("up")}</button><div class="vthumb t1"></div><div class="b1"></div><button class="ib" aria-label="Scroll down">${chev("down")}</button></div>
      </div>
      <div class="pfoot"><a href="#help">Properties help</a><button class="apply">Apply</button></div>
    </section>`;
  }

  private browser() {
    return html`<section class="pane browser">
      <div class="phead bhead">Project Browser - COM APP PROJE... <button class="ib" aria-label="Close project browser">${ic("close")}</button></div>
      <div class="scroller bh">
        <div class="tree"><div class="branch">
          ${TREE.map((g, i) => html`
            ${g.name ? html`<div class="node"><button class="box" aria-label="Collapse ${g.name}"></button><span class="dots"></span><span class="lab">${g.name}</span></div>` : nothing}
            <ul class=${i === TREE.length - 1 ? "kids last" : "kids"}>
              ${g.items.map((n, j) => html`<li class="leaf"><span class="dots"></span><span class=${classMap({ lab: true, sel: i === 0 && j === 0, cur: i === 0 && j === 1 })}>${n}</span></li>`)}
            </ul>`)}
          <div class="legnode">${ic("legend")}<span class="lab">Legends</span></div>
        </div></div>
        <div class="vbar"><button class="ib" aria-label="Scroll up">${chev("up")}</button><div class="t2a"></div><div class="vthumb t2"></div><div class="grow"></div><button class="ib" aria-label="Scroll down">${chev("down")}</button></div>
      </div>
      <div class="hbar"><button class="ib" aria-label="Scroll left">${chev("left")}</button><div class="hthumb"></div><button class="ib" aria-label="Scroll right">${chev("right")}</button></div>
      <div class="btail"></div>
    </section>`;
  }

  private workArea() {
    return html`<section class="work">
      <div class="vtabs">
        ${VIEW_TABS.map((v) => html`<div class=${v.active ? "vtab on" : "vtab"}>${ic(v.icon)}<span>${v.name}</span>${v.active
          ? html`<button class="ib x" aria-label="Close view">${ic("close")}</button>` : nothing}</div>`)}
        <button class="ib vmore" aria-label="More views">${ic("customise")}</button>
      </div>
      <div class="stage">
        <plan-canvas></plan-canvas>
        <div class="tip" role="tooltip">&lt;Sketch&gt; : Model Lines</div>
        <div class="nav">
          <svg viewBox="0 0 42 150" aria-hidden="true">
            <circle cx="34" cy="7" r="5" fill="#bdbdbd"/><path d="M32 5l4 4M36 5l-4 4" stroke="#fff" stroke-width="1.400"/>
            <path d="M18 24h11c2 0 3 1 3 3v12c0 7-5 12-12 12A13 13 0 0 1 18 24z" fill="#eceff4" stroke="#9a9ea6" stroke-width="1.600"/>
            <circle cx="18" cy="37" r="6" fill="#fff" stroke="#9a9ea6" stroke-width="1.600"/><path d="M14 42l-6 5M22 42l5 5" stroke="#9a9ea6" stroke-width="1.400"/>
            <text class="d2" x="21" y="54">2D</text>
            <path d="M17 65h8l-4 4zM17 124h8l-4 4z" fill="#8a8a8a"/><path d="M2 75h38" stroke="#ccc" stroke-width="1.500"/>
            <path d="M10 87h15v15H10z" fill="#b6d5a5" stroke="#86b370" stroke-width="1.500"/>
            <circle cx="26" cy="101" r="5" fill="#fff" stroke="#8d9095" stroke-width="1.600"/><path d="M29 104l4 5" stroke="#8d9095" stroke-width="2.400"/>
            <circle cx="34" cy="142" r="5" fill="#bdbdbd"/><path d="M31 142h6" stroke="#fff" stroke-width="1.600"/>
          </svg>
        </div>
        <div class="vbar sbar"><div class="in"><button class="ib" aria-label="Scroll up">${chev("up")}</button><div class="t3a"></div><div class="t3"></div><div class="t3b"></div><button class="ib" aria-label="Scroll down">${chev("down")}</button></div></div>
      </div>
      <div class="ctrl">
        <button class="scale">1 : 100</button>
        <div class="vc">${VIEW_CTRL.map((n) => iconBtn(n))}</div>
        <button class="ib lft" aria-label="Scroll left">${chev("left")}</button>
        <div class="hs"><div class="h1"></div><div class="hmid"></div><div class="h2"></div></div>
        <button class="ib" aria-label="Scroll right">${chev("right")}</button>
        <svg class="grip" viewBox="0 0 12 12" aria-hidden="true"><path d="M9 0h3v3H9zM4 5h3v3H4zM9 5h3v3H9zM0 9h3v3H0zM4 9h3v3H4zM9 9h3v3H9z" fill="#b5b5b5"/></svg>
      </div>
    </section>`;
  }

  private status() {
    return html`<footer class="status">
      <div class="hint">&lt;Sketch&gt; : Model Lines</div>
      <div class="stat">${ic("workset")}</div>
      <div class="combo c1"><select aria-label="Active workset"><option></option></select>${chev("down")}</div>
      <div class="stat">${ic("editable")}<span class="cnt">:0</span><span class="gap8">${ic("square")}${ic("import")}</span></div>
      <div class="combo c2"><select aria-label="Active design option"><option>Main Model</option></select>${chev("down")}</div>
      <span class="grow"></span>
      <div class="sels">${SELECT_CTRL.map((n) => iconBtn(n))}${iconBtn("filter", "Filter")}</div>
      <span class="endc">:1</span>
    </footer>`;
  }

  render() {
    return html`${this.titleBar()}${this.tabBar()}${this.ribbon()}${this.options()}
      <main class="main"><aside class="side">${this.properties()}${this.browser()}</aside>${this.workArea()}</main>
      ${this.status()}`;
  }
}
